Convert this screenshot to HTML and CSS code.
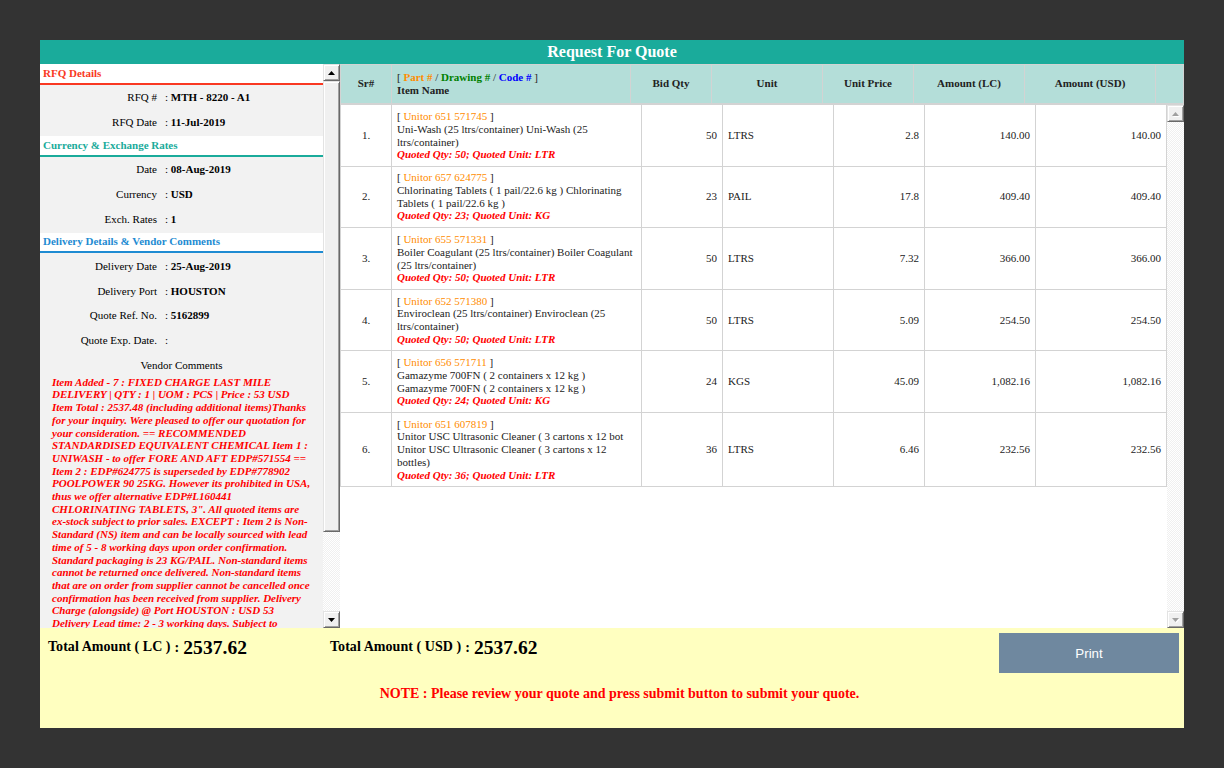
FILE: index.html
```
<!DOCTYPE html>
<html lang="en">
<head>
<meta charset="utf-8">
<title>Request For Quote</title>
<link rel="stylesheet" href="styles.css">
</head>
<body>
<div class="dialog">
  <header class="title">Request For Quote</header>
  <main class="main">
    <aside class="side">
      <div class="details">
        <h2 class="head red">RFQ Details</h2>
        <dl class="fields">
          <dt>RFQ #</dt><dd>: <b>MTH - 8220 - A1</b></dd>
          <dt>RFQ Date</dt><dd>: <b>11-Jul-2019</b></dd>
        </dl>
        <h2 class="head teal">Currency &amp; Exchange Rates</h2>
        <dl class="fields">
          <dt>Date</dt><dd>: <b>08-Aug-2019</b></dd>
          <dt>Currency</dt><dd>: <b>USD</b></dd>
          <dt>Exch. Rates</dt><dd>: <b>1</b></dd>
        </dl>
        <h2 class="head blue">Delivery Details &amp; Vendor Comments</h2>
        <dl class="fields last">
          <dt>Delivery Date</dt><dd>: <b>25-Aug-2019</b></dd>
          <dt>Delivery Port</dt><dd>: <b>HOUSTON</b></dd>
          <dt>Quote Ref. No.</dt><dd>: <b>5162899</b></dd>
          <dt>Quote Exp. Date.</dt><dd>:</dd>
        </dl>
        <div class="vc">Vendor Comments</div>
        <p class="comments">Item Added - 7 : FIXED CHARGE LAST MILE<br>DELIVERY | QTY : 1 | UOM : PCS | Price : 53 USD<br>Item Total : 2537.48 (including additional items)Thanks<br>for your inquiry. Were pleased to offer our quotation for<br>your consideration. == RECOMMENDED<br>STANDARDISED EQUIVALENT CHEMICAL Item 1 :<br>UNIWASH - to offer FORE AND AFT EDP#571554 ==<br>Item 2 : EDP#624775 is superseded by EDP#778902<br>POOLPOWER 90 25KG. However its prohibited in USA,<br>thus we offer alternative EDP#L160441<br>CHLORINATING TABLETS, 3". All quoted items are<br>ex-stock subject to prior sales. EXCEPT : Item 2 is Non-<br>Standard (NS) item and can be locally sourced with lead<br>time of 5 - 8 working days upon order confirmation.<br>Standard packaging is 23 KG/PAIL. Non-standard items<br>cannot be returned once delivered. Non-standard items<br>that are on order from supplier cannot be cancelled once<br>confirmation has been received from supplier. Delivery<br>Charge (alongside) @ Port HOUSTON : USD 53<br>Delivery Lead time: 2 - 3 working days. Subject to</p>
      </div>
      <div class="scroll">
        <div class="btn"><svg width="7" height="4"><path d="M0 4L3.5 0L7 4Z"/></svg></div>
        <div class="thumb"></div>
        <div class="track"></div>
        <div class="btn"><svg width="7" height="4"><path d="M0 0L3.5 4L7 0Z"/></svg></div>
      </div>
    </aside>
    <section class="items">
      <div class="row thead">
        <div>Sr#</div>
        <div class="name"><span><i>[</i> <span class="part">Part #</span> <i>/</i> <span class="drawing">Drawing #</span> <i>/</i> <span class="code">Code #</span> <i>]</i><br>Item Name</span></div>
        <div>Bid Qty</div><div>Unit</div><div>Unit Price</div><div>Amount (LC)</div><div>Amount (USD)</div><div></div>
      </div>
      <div class="body">
        <div class="rows">
          <div class="row"><div class="sr">1.</div><div><span>[ <span class="part">Unitor 651 571745</span> ]<br>Uni-Wash (25 ltrs/container) Uni-Wash (25<br>ltrs/container)<br><em>Quoted Qty: 50; Quoted Unit: LTR</em></span></div><div class="num">50</div><div>LTRS</div><div class="num">2.8</div><div class="num">140.00</div><div class="num">140.00</div></div>
          <div class="row up"><div class="sr">2.</div><div><span>[ <span class="part">Unitor 657 624775</span> ]<br>Chlorinating Tablets ( 1 pail/22.6 kg ) Chlorinating<br>Tablets ( 1 pail/22.6 kg )<br><em>Quoted Qty: 23; Quoted Unit: KG</em></span></div><div class="num">23</div><div>PAIL</div><div class="num">17.8</div><div class="num">409.40</div><div class="num">409.40</div></div>
          <div class="row"><div class="sr">3.</div><div><span>[ <span class="part">Unitor 655 571331</span> ]<br>Boiler Coagulant (25 ltrs/container) Boiler Coagulant<br>(25 ltrs/container)<br><em>Quoted Qty: 50; Quoted Unit: LTR</em></span></div><div class="num">50</div><div>LTRS</div><div class="num">7.32</div><div class="num">366.00</div><div class="num">366.00</div></div>
          <div class="row"><div class="sr">4.</div><div><span>[ <span class="part">Unitor 652 571380</span> ]<br>Enviroclean (25 ltrs/container) Enviroclean (25<br>ltrs/container)<br><em>Quoted Qty: 50; Quoted Unit: LTR</em></span></div><div class="num">50</div><div>LTRS</div><div class="num">5.09</div><div class="num">254.50</div><div class="num">254.50</div></div>
          <div class="row"><div class="sr">5.</div><div><span>[ <span class="part">Unitor 656 571711</span> ]<br>Gamazyme 700FN ( 2 containers x 12 kg )<br>Gamazyme 700FN ( 2 containers x 12 kg )<br><em>Quoted Qty: 24; Quoted Unit: KG</em></span></div><div class="num">24</div><div>KGS</div><div class="num">45.09</div><div class="num">1,082.16</div><div class="num">1,082.16</div></div>
          <div class="row"><div class="sr">6.</div><div><span>[ <span class="part">Unitor 651 607819</span> ]<br>Unitor USC Ultrasonic Cleaner ( 3 cartons x 12 bot<br>Unitor USC Ultrasonic Cleaner ( 3 cartons x 12<br>bottles)<br><em>Quoted Qty: 36; Quoted Unit: LTR</em></span></div><div class="num">36</div><div>LTRS</div><div class="num">6.46</div><div class="num">232.56</div><div class="num">232.56</div></div>
        </div>
        <div class="scroll off">
          <div class="btn"><svg width="7" height="4"><path d="M0 4L3.5 0L7 4Z"/></svg></div>
          <div class="track"></div>
          <div class="btn"><svg width="7" height="4"><path d="M0 0L3.5 4L7 0Z"/></svg></div>
        </div>
      </div>
    </section>
  </main>
  <footer class="foot">
    <div class="totals">
      <div class="total lc"><span>Total Amount ( LC )</span><b>:</b><strong>2537.62</strong></div>
      <div class="total"><span>Total Amount ( USD )</span><b>:</b><strong>2537.62</strong></div>
      <button class="print">Print</button>
    </div>
    <p class="note">NOTE : Please review your quote and press submit button to submit your quote.</p>
  </footer>
</div>
</body>
</html>
```
FILE: styles.css
```
* { box-sizing: border-box; }
html, body { margin: 0; height: 100%; }
body { background: #333; padding: 40px; overflow: hidden; font: 11px/12.67px "Liberation Serif", "Times New Roman", serif; color: #000; }
.dialog { width: 1144px; height: 688px; display: flex; flex-direction: column; background: #fff; }
.title { height: 24px; background: #1aab9b; color: #fff; font-weight: bold; font-size: 16px; line-height: 24px; text-align: center; }
.main { height: 564px; display: flex; }
.side { width: 300px; display: flex; }
.details { width: 283px; height: 564px; overflow: hidden; background: #f2f2f2; }
.head { margin: 0; height: 21px; background: #fff; border-bottom: 2px solid; padding-left: 3px; font-size: 11px; line-height: 19px; }
.head.blue { height: 20px; line-height: 17px; }
.red { color: #f93822; }
.teal { color: #1aab9b; }
.blue { color: #1e8bd2; }
.fields { margin: 0; padding-bottom: 1px; display: grid; grid-template-columns: 117px 1fr; column-gap: 8px; grid-auto-rows: 25px; line-height: 25px; }
.fields.last { grid-auto-rows: 24.7px; padding: 1px 0 0; }
.fields dt { text-align: right; }
.fields dd { margin: 0; }
.vc { text-align: center; height: 23px; line-height: 25px; }
.comments { margin: 0; padding-left: 12px; color: #f00; font-weight: bold; font-style: italic; line-height: 12.7px; white-space: nowrap; }

.scroll { width: 17px; display: flex; flex-direction: column; }
.btn, .thumb { background: #f0f0f0; border: 1px solid; border-color: #e3e3e3 #696969 #696969 #e3e3e3; box-shadow: inset 1px 1px #fff, inset -1px -1px #a0a0a0; }
.btn { height: 17px; display: flex; align-items: center; justify-content: center; flex: none; }
.btn svg { display: block; fill: #000; }
.off .btn svg { fill: #a0a0a0; filter: drop-shadow(1px 1px #fff); }
.thumb { height: 451px; }
.track { flex: 1; background: repeating-conic-gradient(#fff 0 25%, #f0f0f0 0 50%) 0 0 / 2px 2px; }

.items { width: 844px; color: #222; }
.row { display: grid; grid-template-columns: 51px 250px 81px 111px 91px 111px 131px; height: 62px; border-bottom: 1px solid #d3d3d3; }
.row > div { display: flex; align-items: center; padding: 0 5px; border-right: 1px solid #d3d3d3; white-space: nowrap; }
.row .sr { justify-content: center; }
.row .num { justify-content: flex-end; }
.rows { width: 827px; border-left: 1px solid #d3d3d3; align-self: flex-start; }
.rows .row:nth-child(even) { height: 61px; }
.rows .row.up > div { padding-bottom: 1px; }
.rows .row:last-child { height: 74px; }
.thead.row { grid-template-columns: 51px 239px 81px 111px 91px 111px 131px 28px; height: 41px; background: #b4ded9; border: solid #d3d3d3; border-width: 1px 0 2px 1px; font-weight: bold; }
.thead.row > div { justify-content: center; padding-bottom: 1px; }
.thead.row > .name { justify-content: flex-start; padding-bottom: 0; }
.thead i { font-style: normal; font-weight: normal; }
.part { color: #ff8c00; }
.drawing { color: #008000; }
.code { color: #00f; }
em { color: #f00; font-weight: bold; }
.body { display: flex; height: 523px; justify-content: space-between; }

.foot { height: 100px; background: #ffffc0; padding: 5px 5px 0 8px; }
.totals { display: flex; height: 40px; }
.total { display: flex; font-size: 14px; font-weight: bold; line-height: 28px; letter-spacing: 0.05px; }
.total.lc { width: 282px; }
.total b { padding: 1px 4px 0; }
.total strong { font-size: 19.5px; line-height: 29px; }
.print { margin-left: auto; width: 180px; height: 40px; border: 0; background: #6f889f; color: #fff; font: 13.33px "Liberation Sans", Arial, sans-serif; }
.note { margin: 12px 0 0; padding-left: 12px; text-align: center; color: #f00; font-size: 14px; font-weight: bold; line-height: 17px; }
```
